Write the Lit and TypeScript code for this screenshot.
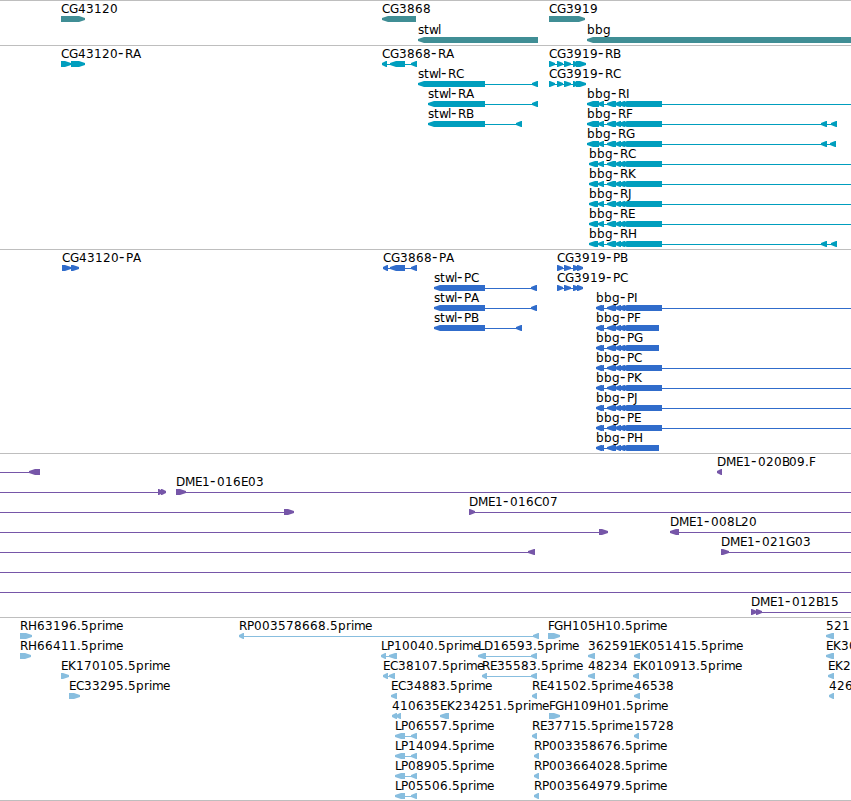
import { LitElement, css, html, svg } from 'lit';
import { customElement, property } from 'lit/decorators.js';

type Strand = '+' | '-';
type Block = [number, number];

interface Feature {
    row: number;
    strand: Strand;
    blocks: Block[];
    label?: string;
    // extent of the connecting line, when it runs past the blocks
    from?: number;
    to?: number;
}

interface Track {
    name: string;
    rows: number;
    pitch: number;
    pad: number;
    features: Feature[];
}

const WIDTH = 851;
const HEAD = 6;
const BAR = 6;

// label advances in whole pixels, anything missing is 8
const ADVANCE: Record<string, number> = {
    B: 7, D: 9, M: 10, E: 7, G: 9, H: 9, I: 4, J: 4, L: 6, P: 7, F: 6,
    '-': 7, '.': 4, s: 6, t: 5, w: 9, l: 3, r: 5, i: 3, m: 11, e: 7,
};

const f = (row: number, strand: Strand, label: string, blocks: Block[], to?: number, from?: number): Feature =>
    ({ row, strand, label, blocks, to, from });

const BBG: Block[] = [[607, 616], [615, 621], [619, 625], [621, 662]];
const RNA_A: Block[] = [[587, 599], [598, 604], ...BBG];
const RNA_B: Block[] = [[589, 598], [598, 604], ...BBG];
const PEP: Block[] = [[596, 602], [598, 604], [607, 616], [615, 621], [619, 625]];
const PEP_LONG: Block[] = [...PEP, [621, 662]];
const PEP_SHORT: Block[] = [...PEP, [621, 659]];
const CG3919_R: Block[] = [[549, 555], [557, 563], [564, 571], [573, 579], [576, 586]];
const CG3919_P: Block[] = [[557, 563], [564, 571], [573, 579], [577, 583]];

const TRACKS: Track[] = [
    {
        name: 'gene', rows: 2, pitch: 21, pad: 2,
        features: [
            f(0, '+', 'CG43120', [[61, 85]]),
            f(0, '-', 'CG3868', [[382, 416]]),
            f(0, '+', 'CG3919', [[549, 585]]),
            f(1, '-', 'stwl', [[418, 538]]),
            f(1, '-', 'bbg', [[587, WIDTH]]),
        ],
    },
    {
        name: 'transcript', rows: 10, pitch: 20, pad: 3,
        features: [
            f(0, '+', 'CG43120-RA', [[61, 71], [71, 85]]),
            f(0, '-', 'CG3868-RA', [[382, 387], [390, 405], [411, 417]]),
            f(0, '+', 'CG3919-RB', CG3919_R),
            f(1, '-', 'stwl-RC', [[418, 485], [532, 538]]),
            f(1, '+', 'CG3919-RC', CG3919_R),
            f(2, '-', 'stwl-RA', [[428, 485], [532, 538]]),
            f(2, '-', 'bbg-RI', RNA_A, WIDTH),
            f(3, '-', 'stwl-RB', [[428, 485], [516, 522]]),
            f(3, '-', 'bbg-RF', [...RNA_A, [821, 827], [831, 837]]),
            f(4, '-', 'bbg-RG', [...RNA_A, [821, 827], [830, 836]]),
            f(5, '-', 'bbg-RC', RNA_B, WIDTH),
            f(6, '-', 'bbg-RK', RNA_B, WIDTH),
            f(7, '-', 'bbg-RJ', RNA_B, WIDTH),
            f(8, '-', 'bbg-RE', RNA_B, WIDTH),
            f(9, '-', 'bbg-RH', [...RNA_B, [821, 827], [831, 837]]),
        ],
    },
    {
        name: 'protein', rows: 10, pitch: 20, pad: 3,
        features: [
            f(0, '+', 'CG43120-PA', [[62, 71], [71, 79]]),
            f(0, '-', 'CG3868-PA', [[383, 388], [390, 405], [411, 417]]),
            f(0, '+', 'CG3919-PB', CG3919_P),
            f(1, '-', 'stwl-PC', [[434, 485], [531, 537]]),
            f(1, '+', 'CG3919-PC', CG3919_P),
            f(2, '-', 'stwl-PA', [[434, 485], [531, 537]]),
            f(2, '-', 'bbg-PI', PEP_LONG, WIDTH),
            f(3, '-', 'stwl-PB', [[434, 485], [516, 522]]),
            f(3, '-', 'bbg-PF', PEP_SHORT),
            f(4, '-', 'bbg-PG', PEP_SHORT),
            f(5, '-', 'bbg-PC', PEP_LONG, WIDTH),
            f(6, '-', 'bbg-PK', PEP_LONG, WIDTH),
            f(7, '-', 'bbg-PJ', PEP_LONG, WIDTH),
            f(8, '-', 'bbg-PE', PEP_LONG, WIDTH),
            f(9, '-', 'bbg-PH', PEP_SHORT),
        ],
    },
    {
        name: 'clone', rows: 8, pitch: 20, pad: 3,
        features: [
            f(0, '-', '', [[29, 40]], undefined, 0),
            f(0, '-', 'DME1-020B09.F', [[717, 722]]),
            f(1, '+', '', [[158, 163], [161, 166]], undefined, 0),
            f(1, '+', 'DME1-016E03', [[176, 186]], WIDTH),
            f(2, '+', '', [[284, 294]], undefined, 0),
            f(2, '+', 'DME1-016C07', [[469, 475]], WIDTH),
            f(3, '+', '', [[599, 608]], undefined, 0),
            f(3, '-', 'DME1-008L20', [[670, 679]], WIDTH),
            f(4, '-', '', [[528, 535]], undefined, 0),
            f(4, '+', 'DME1-021G03', [[721, 729]], WIDTH),
            f(5, '+', '', [], WIDTH, 0),
            f(6, '+', '', [], WIDTH, 0),
            f(7, '+', 'DME1-012B15', [[751, 757], [756, 762]], WIDTH),
        ],
    },
    {
        name: 'est', rows: 9, pitch: 20, pad: 2,
        features: [
            f(0, '+', 'RH63196.5prime', [[20, 32]]),
            f(0, '-', 'RP003578668.5prime', [[239, 244], [533, 539]]),
            f(0, '+', 'FGH105H10.5prime', [[548, 560]]),
            f(0, '-', '521', [[826, 834]]),
            f(1, '+', 'RH66411.5prime', [[20, 31]]),
            f(1, '-', 'LP10040.5prime', [[381, 386], [389, 397]]),
            f(1, '-', 'LD16593.5prime', [[478, 486], [531, 537]]),
            f(1, '-', '362591', [[588, 595]]),
            f(1, '-', 'EK051415.5prime', [[634, 640]]),
            f(1, '-', 'EK30', [[826, 834]]),
            f(2, '+', 'EK170105.5prime', [[61, 69]]),
            f(2, '-', 'EC38107.5prime', [[383, 388], [389, 395]]),
            f(2, '-', 'RE35583.5prime', [[482, 487], [531, 537]]),
            f(2, '-', '48234', [[588, 595]]),
            f(2, '-', 'EK010913.5prime', [[633, 639]]),
            f(2, '-', 'EK2', [[828, 834]]),
            f(3, '+', 'EC33295.5prime', [[69, 80]]),
            f(3, '-', 'EC34883.5prime', [[391, 397]]),
            f(3, '-', 'RE41502.5prime', [[532, 537]]),
            f(3, '-', '46538', [[634, 640]]),
            f(3, '-', '426', [[829, 834]]),
            f(4, '-', '410635', [[392, 397], [396, 401]]),
            f(4, '-', 'EK234251.5prime', [[440, 449]]),
            f(4, '+', 'FGH109H01.5prime', [[549, 560]]),
            f(5, '-', 'LP06557.5prime', [[395, 405], [411, 417]]),
            f(5, '-', 'RE37715.5prime', [[532, 537]]),
            f(5, '-', '15728', [[634, 639]]),
            f(6, '-', 'LP14094.5prime', [[395, 405], [411, 417]]),
            f(6, '-', 'RP003358676.5prime', [[534, 539]]),
            f(7, '-', 'LP08905.5prime', [[395, 405], [411, 417]]),
            f(7, '-', 'RP003664028.5prime', [[534, 539]]),
            f(8, '-', 'LP05506.5prime', [[395, 405], [411, 417]]),
            f(8, '-', 'RP003564979.5prime', [[534, 539]]),
        ],
    },
];

@customElement('genome-track')
export class GenomeTrack extends LitElement {
    @property({ attribute: false }) track!: Track;

    static styles = css`
    :host {
      display: block;
      border-top: 1px solid #bebebe;
    }

    svg {
      display: block;
      overflow: visible;
    }

    text {
      font-family: 'DejaVu Sans', sans-serif;
      font-size: 12px;
      fill: #000;
    }

    .dash {
      font-size: 15px;
    }

    .line {
      shape-rendering: crispEdges;
    }

    .gene {
      fill: #408e95;
    }

    .transcript {
      fill: #009ebe;
    }

    .protein {
      fill: #306ccb;
    }

    .clone {
      fill: #7656a8;
    }

    .est {
      fill: #88bedf;
    }
  `;

    private arrow([start, end]: Block, strand: Strand, top: number) {
        const bottom = top + BAR;
        const head = Math.min(HEAD, end - start - 1);
        const points = strand === '+'
            ? [[start, top], [end - head, top], [end, top + 2], [end, top + 4], [end - head, bottom], [start, bottom]]
            : [[end, top], [start + head, top], [start, top + 2], [start, top + 4], [start + head, bottom], [end, bottom]];
        return svg`<polygon points=${points.map((p) => p.join(',')).join(' ')}></polygon>`;
    }

    private label(text: string, x: number, y: number) {
        const xs: number[] = [];
        for (const ch of text) {
            xs.push(x);
            x += ADVANCE[ch] ?? 8;
        }
        const [head, tail] = text.split('-');
        if (tail === undefined) {
            return svg`<text x=${xs.join(' ')} y=${y}>${head}</text>`;
        }
        return svg`<text x=${xs.join(' ')} y=${y}>${head}<tspan class="dash">-</tspan>${tail}</text>`;
    }

    private feature(item: Feature) {
        const y = item.row * this.track.pitch;
        const from = item.from ?? item.blocks[0][0];
        const to = item.to ?? item.blocks[item.blocks.length - 1][1];
        return svg`
      <g class=${this.track.name}>
        <rect class="line" x=${from} y=${y + 18} width=${to - from} height="1"></rect>
        ${item.blocks.map((block) => this.arrow(block, item.strand, y + 15))}
      </g>
      ${item.label ? this.label(item.label, item.blocks[0][0], y + 12) : ''}
    `;
    }

    render() {
        const { rows, pitch, pad, features } = this.track;
        return html`
      <svg width=${WIDTH} height=${rows * pitch + pad}>
        ${features.map((item) => this.feature(item))}
      </svg>
    `;
    }
}

@customElement('app-root')
export class AppRoot extends LitElement {
    static styles = css`
    :host {
      display: block;
      width: 851px;
      height: 801px;
      overflow: hidden;
      background-color: #fff;
    }

    .tracks {
      box-sizing: border-box;
      height: 801px;
      border-bottom: 1px solid #bebebe;
    }
  `;

    render() {
        return html`
      <div class="tracks">
        ${TRACKS.map((track) => html`<genome-track .track=${track}></genome-track>`)}
      </div>
    `;
    }
}
